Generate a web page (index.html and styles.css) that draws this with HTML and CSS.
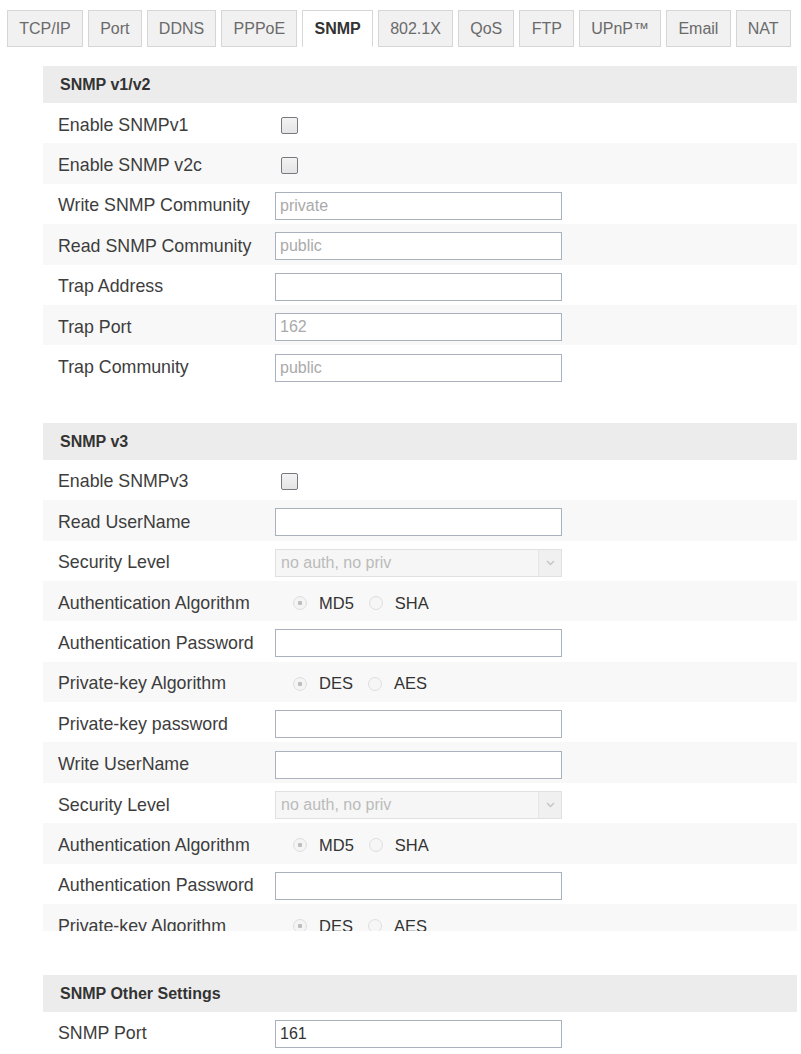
FILE: index.html
```html
<!DOCTYPE html>
<html lang="en">
<head>
    <meta charset="UTF-8">
    <meta name="viewport" content="width=device-width, initial-scale=1.0">
    <title>Network - SNMP</title>
    <link rel="stylesheet" href="styles.css">
</head>
<body>
    <div class="tabs">
        <a href="#" class="tab">TCP/IP</a>
        <a href="#" class="tab">Port</a>
        <a href="#" class="tab">DDNS</a>
        <a href="#" class="tab">PPPoE</a>
        <a href="#" class="tab active">SNMP</a>
        <a href="#" class="tab">802.1X</a>
        <a href="#" class="tab">QoS</a>
        <a href="#" class="tab">FTP</a>
        <a href="#" class="tab">UPnP&trade;</a>
        <a href="#" class="tab">Email</a>
        <a href="#" class="tab">NAT</a>
    </div>

    <div class="content">
        <div class="section">
            <div class="section-head">SNMP v1/v2</div>
            <div class="row">
                <label>Enable SNMPv1</label>
                <input type="checkbox" class="check">
            </div>
            <div class="row">
                <label>Enable SNMP v2c</label>
                <input type="checkbox" class="check">
            </div>
            <div class="row">
                <label>Write SNMP Community</label>
                <input type="text" class="field" value="private" disabled>
            </div>
            <div class="row">
                <label>Read SNMP Community</label>
                <input type="text" class="field" value="public" disabled>
            </div>
            <div class="row">
                <label>Trap Address</label>
                <input type="text" class="field" value="" disabled>
            </div>
            <div class="row">
                <label>Trap Port</label>
                <input type="text" class="field" value="162" disabled>
            </div>
            <div class="row">
                <label>Trap Community</label>
                <input type="text" class="field" value="public" disabled>
            </div>
        </div>

        <div class="section v3">
            <div class="section-head">SNMP v3</div>
            <div class="scroll">
                <div class="row">
                    <label>Enable SNMPv3</label>
                    <input type="checkbox" class="check">
                </div>
                <div class="row">
                    <label>Read UserName</label>
                    <input type="text" class="field" disabled>
                </div>
                <div class="row">
                    <label>Security Level</label>
                    <div class="select">
                        <span>no auth, no priv</span>
                        <span class="arrow"><svg width="9" height="6" viewBox="0 0 9 6"><path d="M1 1l3.5 3.5L8 1" fill="none" stroke="#c4c4c4" stroke-width="1.4"/></svg></span>
                    </div>
                </div>
                <div class="row">
                    <label>Authentication Algorithm</label>
                    <div class="radios">
                        <input type="radio" name="auth1" checked disabled><span>MD5</span>
                        <input type="radio" name="auth1" disabled><span>SHA</span>
                    </div>
                </div>
                <div class="row">
                    <label>Authentication Password</label>
                    <input type="password" class="field" disabled>
                </div>
                <div class="row">
                    <label>Private-key Algorithm</label>
                    <div class="radios">
                        <input type="radio" name="priv1" checked disabled><span>DES</span>
                        <input type="radio" name="priv1" disabled><span>AES</span>
                    </div>
                </div>
                <div class="row">
                    <label>Private-key password</label>
                    <input type="password" class="field" disabled>
                </div>
                <div class="row">
                    <label>Write UserName</label>
                    <input type="text" class="field" disabled>
                </div>
                <div class="row">
                    <label>Security Level</label>
                    <div class="select">
                        <span>no auth, no priv</span>
                        <span class="arrow"><svg width="9" height="6" viewBox="0 0 9 6"><path d="M1 1l3.5 3.5L8 1" fill="none" stroke="#c4c4c4" stroke-width="1.4"/></svg></span>
                    </div>
                </div>
                <div class="row">
                    <label>Authentication Algorithm</label>
                    <div class="radios">
                        <input type="radio" name="auth2" checked disabled><span>MD5</span>
                        <input type="radio" name="auth2" disabled><span>SHA</span>
                    </div>
                </div>
                <div class="row">
                    <label>Authentication Password</label>
                    <input type="password" class="field" disabled>
                </div>
                <div class="row">
                    <label>Private-key Algorithm</label>
                    <div class="radios">
                        <input type="radio" name="priv2" checked disabled><span>DES</span>
                        <input type="radio" name="priv2" disabled><span>AES</span>
                    </div>
                </div>
            </div>
        </div>

        <div class="section other">
            <div class="section-head">SNMP Other Settings</div>
            <div class="row">
                <label>SNMP Port</label>
                <input type="text" class="field active-field" value="161">
            </div>
        </div>
    </div>
</body>
</html>
```

FILE: styles.css
```css
body {
    font-family: "Liberation Sans", Arial, sans-serif;
    background: #fff;
    color: #333;
    margin: 0;
    padding: 0;
}

.tabs {
    display: flex;
    gap: 5px;
    padding: 10px 0 0 7px;
}

.tab {
    display: block;
    height: 35px;
    line-height: 35px;
    padding: 0 11.2px;
    border: 1px solid #d6d6d6;
    background-color: #f1f1f1;
    color: #6a6a6a;
    font-size: 16px;
    text-decoration: none;
}

.tab.active {
    background-color: #fff;
    color: #333;
    font-weight: bold;
    border-bottom-color: #fff;
}

.content {
    margin: 19px 4px 0 43px;
}

.section + .section {
    margin-top: 37px;
}

.section.other {
    margin-top: 44px;
}

.section-head {
    height: 37px;
    line-height: 37px;
    padding-left: 17px;
    background-color: #ececec;
    font-size: 16px;
    font-weight: bold;
    color: #333;
}

.row {
    display: flex;
    align-items: center;
    box-sizing: border-box;
    height: 40.4px;
    padding: 4px 0 0 15px;
}

.row:nth-child(odd) {
    background-color: #f8f8f8;
}

.scroll .row:nth-child(odd) {
    background-color: transparent;
}

.scroll .row:nth-child(even) {
    background-color: #f8f8f8;
}

.row label {
    width: 217px;
    flex-shrink: 0;
    font-size: 17.8px;
    color: #3d3d3d;
}

.scroll {
    height: 471px;
    overflow: hidden;
}

.check {
    appearance: none;
    width: 17px;
    height: 17px;
    margin: 0 0 0 6px;
    border: 1.5px solid #767a80;
    border-radius: 2px;
    background: linear-gradient(#f3f3f3, #e4e4e4);
}

.field {
    width: 287px;
    height: 28px;
    box-sizing: border-box;
    margin: 0;
    padding: 0 4px;
    border: 1px solid #a9b1bc;
    background-color: #fff;
    color: #aaa;
    font-family: "Liberation Sans", Arial, sans-serif;
    font-size: 16px;
}

.active-field {
    color: #333;
}

.select {
    display: flex;
    align-items: center;
    justify-content: space-between;
    width: 287px;
    height: 28px;
    box-sizing: border-box;
    padding-left: 5px;
    border: 1px solid #e0e0e0;
    background-color: #f6f6f6;
    color: #bbb;
    font-size: 16px;
}

.select .arrow {
    display: flex;
    align-items: center;
    justify-content: center;
    width: 22px;
    height: 100%;
    border-left: 1px solid #e6e6e6;
    background-color: #f0f0f0;
}

.radios {
    display: flex;
    align-items: center;
    font-size: 16.5px;
    color: #333;
}

.radios input {
    appearance: none;
    width: 14px;
    height: 14px;
    margin: 0 12px 0 18px;
    border: 1px solid #dedede;
    border-radius: 50%;
    background-color: #f6f6f6;
}

.radios input + span + input {
    margin-left: 15px;
}

.radios input:checked {
    background: radial-gradient(circle, #bdbdbd 0 2px, #f4f4f4 2.5px);
}
```
